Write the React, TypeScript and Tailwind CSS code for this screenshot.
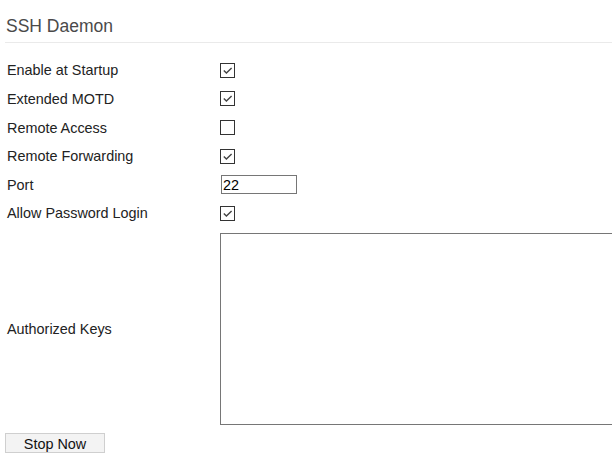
import React from 'react'

function Check({ checked }: { checked: boolean }) {
  return (
    <span className="flex h-[15px] w-[15px] items-center justify-center border border-[#333] bg-white">
      {checked && (
        <svg width="11" height="11" viewBox="0 0 11 11">
          <path d="M1.8 5.6 L4.4 8.1 L9.6 2.9" fill="none" stroke="#444" strokeWidth="1.4" />
        </svg>
      )}
    </span>
  )
}

const rows = [
  { label: 'Enable at Startup', checked: true },
  { label: 'Extended MOTD', checked: true },
  { label: 'Remote Access', checked: false },
  { label: 'Remote Forwarding', checked: true },
]

export default function App() {
  return (
    <div className="h-[471px] w-[612px] overflow-hidden bg-white font-['Liberation_Sans',Arial,sans-serif] text-[14.4px] text-[#222]">
      <div className="pl-[5px]">
        <h2 className="pl-[1px] pt-[16px] pb-[6px] text-[17.5px] leading-[20px] text-[#4a4a4a]">SSH Daemon</h2>
        <div className="h-px bg-[#eaeaea]" />
      </div>
      <div className="pt-[13px]">
        {rows.map((r) => (
          <div key={r.label} className="flex h-[28.6px] items-center">
            <span className="w-[220px] pl-[7px] pt-[2px]">{r.label}</span>
            <Check checked={r.checked} />
          </div>
        ))}
        <div className="flex h-[28.6px] items-center">
          <span className="w-[221px] pl-[7px] pt-[2px]">Port</span>
          <input
            type="text"
            defaultValue="22"
            className="h-[19px] w-[76px] border border-[#767676] px-[1px] text-[14.4px] leading-[17px] text-black outline-none"
          />
        </div>
        <div className="flex h-[28.6px] items-center">
          <span className="w-[220px] pl-[7px] pt-[2px]">Allow Password Login</span>
          <Check checked={true} />
        </div>
        <div className="mt-[5px] flex items-center">
          <span className="w-[220px] shrink-0 pl-[7px] pt-[2px]">Authorized Keys</span>
          <textarea className="h-[192px] w-[420px] shrink-0 resize-none border border-[#767676] outline-none" />
        </div>
        <div className="pl-[5px] pt-[8px]">
          <button className="h-[20px] w-[100px] border border-[#cfcfcf] bg-[#f3f3f3] pt-[1px] text-[14.4px] leading-[18px] text-[#111]">
            Stop Now
          </button>
        </div>
      </div>
    </div>
  )
}
